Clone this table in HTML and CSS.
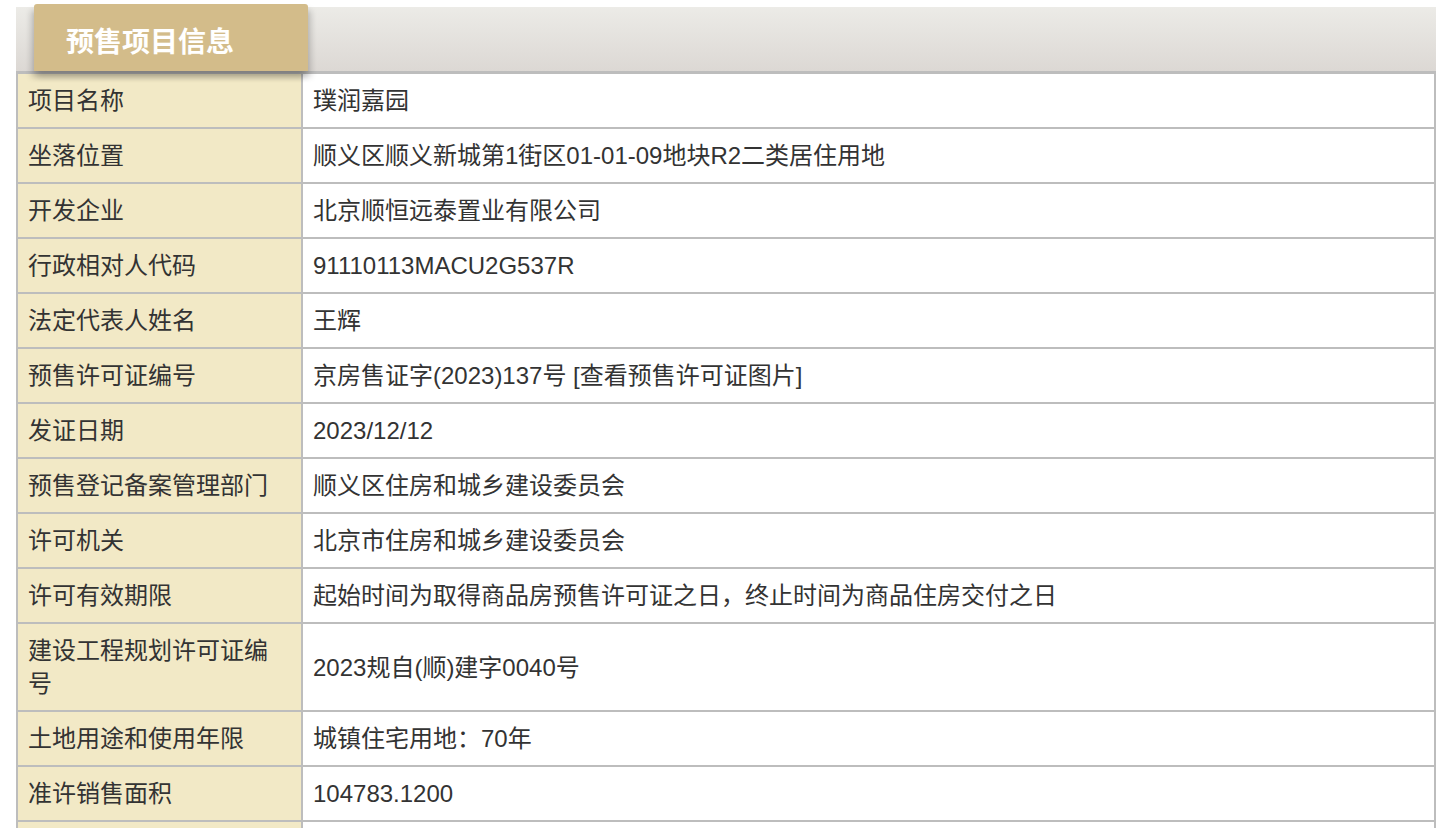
FILE: index.html
```html
<!DOCTYPE html>
<html lang="zh-CN">
<head>
<meta charset="utf-8">
<title>预售项目信息</title>
<link rel="stylesheet" href="styles.css">
</head>
<body>
<div class="panel">
  <div class="panel-head">
    <div class="tab">预售项目信息</div>
  </div>
  <table class="info">
    <tr><td class="label">项目名称</td><td class="value">璞润嘉园</td></tr>
    <tr><td class="label">坐落位置</td><td class="value">顺义区顺义新城第1街区01-01-09地块R2二类居住用地</td></tr>
    <tr><td class="label">开发企业</td><td class="value">北京顺恒远泰置业有限公司</td></tr>
    <tr><td class="label">行政相对人代码</td><td class="value">91110113MACU2G537R</td></tr>
    <tr><td class="label">法定代表人姓名</td><td class="value">王辉</td></tr>
    <tr><td class="label">预售许可证编号</td><td class="value">京房售证字(2023)137号 <a class="link" href="#">[查看预售许可证图片]</a></td></tr>
    <tr><td class="label">发证日期</td><td class="value">2023/12/12</td></tr>
    <tr><td class="label">预售登记备案管理部门</td><td class="value">顺义区住房和城乡建设委员会</td></tr>
    <tr><td class="label">许可机关</td><td class="value">北京市住房和城乡建设委员会</td></tr>
    <tr><td class="label">许可有效期限</td><td class="value">起始时间为取得商品房预售许可证之日，终止时间为商品住房交付之日</td></tr>
    <tr><td class="label">建设工程规划许可证编号</td><td class="value">2023规自(顺)建字0040号</td></tr>
    <tr><td class="label">土地用途和使用年限</td><td class="value">城镇住宅用地：70年</td></tr>
    <tr><td class="label">准许销售面积</td><td class="value">104783.1200</td></tr>
    <tr><td class="label">&nbsp;</td><td class="value">&nbsp;</td></tr>
  </table>
</div>
</body>
</html>
```

FILE: styles.css
```css
html, body {
  margin: 0;
  padding: 0;
  background: #ffffff;
}

body {
  font-family: "Liberation Sans", "Noto Sans CJK SC", sans-serif;
  color: #333333;
  overflow: hidden;
}

.panel {
  margin: 4px 12px 0 16px;
  width: 1420px;
}

.panel-head {
  position: relative;
  height: 67px;
  display: flex;
  align-items: flex-end;
  padding-left: 18px;
}

.panel-head::before {
  content: "";
  position: absolute;
  left: 0;
  right: 0;
  top: 3px;
  bottom: 0;
  background: linear-gradient(#ecebe7, #dcd8d4);
  z-index: 0;
}

.tab {
  position: relative;
  z-index: 1;
  width: 274px;
  height: 67px;
  box-sizing: border-box;
  padding-left: 32px;
  background: #d3bc8a;
  border-radius: 3px 3px 0 0;
  color: #ffffff;
  font-family: "Noto Sans CJK SC", sans-serif;
  font-weight: 700;
  font-size: 28px;
  line-height: 72px;
  box-shadow: -3px 6px 6px rgba(0, 0, 0, 0.18), 3px 6px 6px rgba(0, 0, 0, 0.18);
}

.info {
  width: 1420px;
  border-collapse: collapse;
  border-top: 3px solid #bdbdbd;
  border-left: 2px solid #bdbdbd;
  border-right: 2px solid #bdbdbd;
  table-layout: fixed;
  font-size: 24px;
  line-height: 33px;
}

.info td {
  border-bottom: 2px solid #bdbdbd;
  padding: 10px 10px;
  vertical-align: middle;
  font-family: "Liberation Sans", "Noto Sans CJK SC", sans-serif;
}

.info td.label {
  width: 263px;
  background: #f2e9c6;
  border-right: 2px solid #bdbdbd;
  color: #333333;
}

.info td.value {
  background: #ffffff;
  color: #333333;
}

.link {
  color: #333333;
  text-decoration: none;
}
```
